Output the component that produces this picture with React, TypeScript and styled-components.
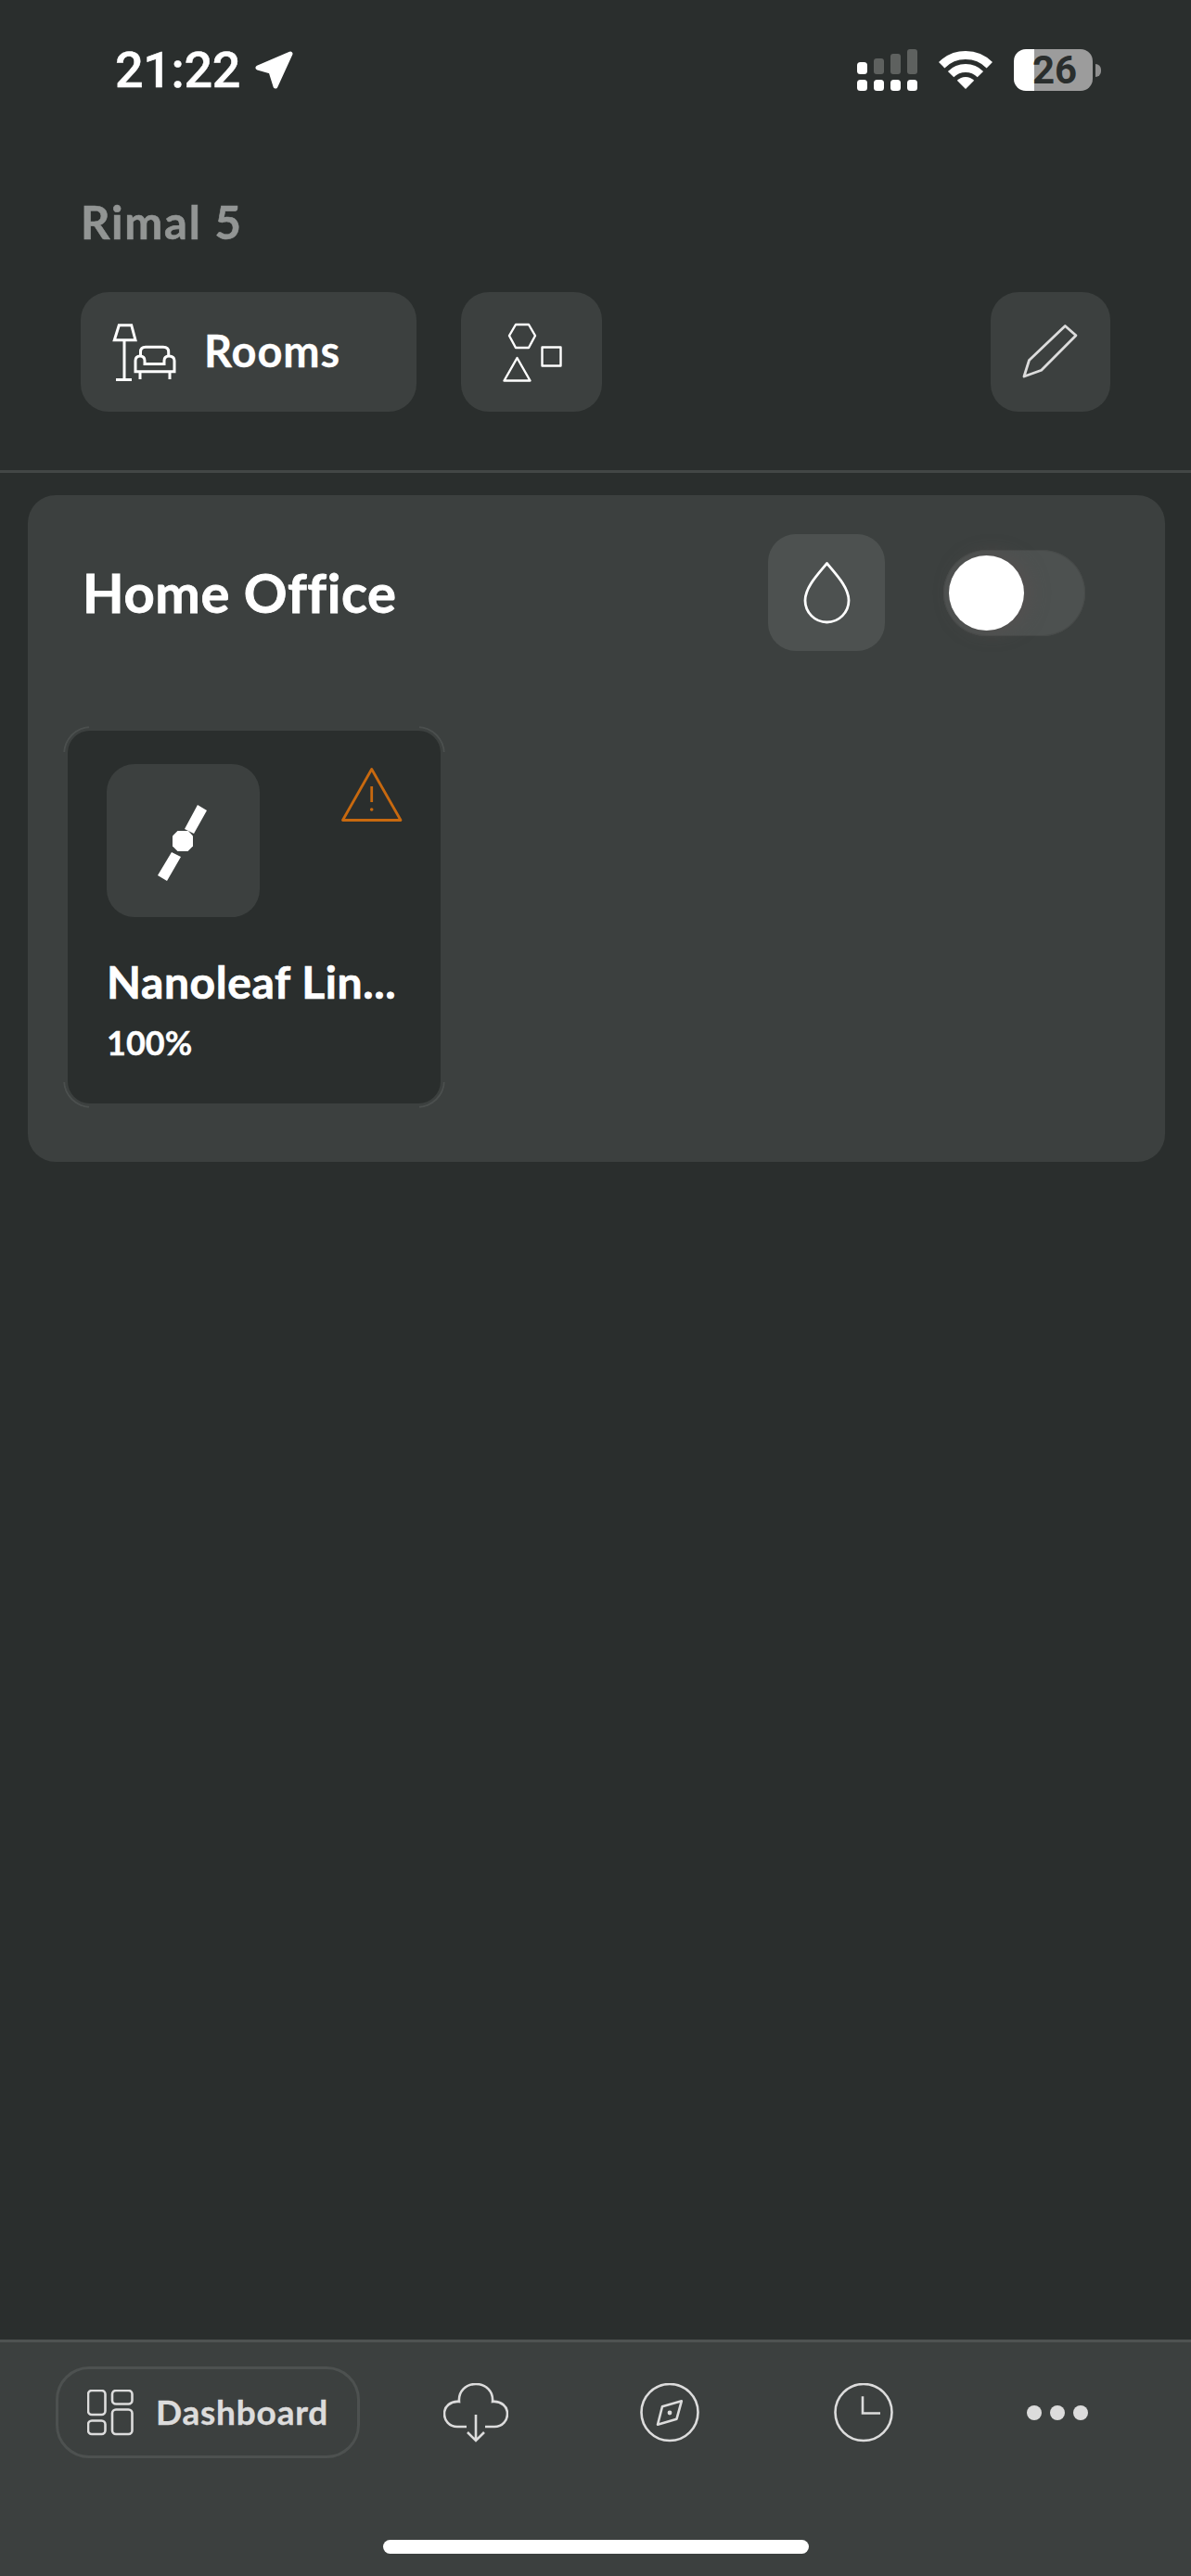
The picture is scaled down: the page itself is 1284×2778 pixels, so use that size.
import React from "react";
import styled, { createGlobalStyle } from "styled-components";

const Global = createGlobalStyle`
  html, body { margin: 0; padding: 0; background: #2a2e2d; }
  * { box-sizing: border-box; }
`;
const sans = `"Lato", "Liberation Sans", sans-serif`;

const Page = styled.div`
  width: 1284px; height: 2778px; display: flex; flex-direction: column;
  background: #2a2e2d; font-family: ${sans}; color: #fff; overflow: hidden;
`;
const StatusBar = styled.div`
  height: 215px; padding: 53px 97px 0 124px; display: flex; justify-content: space-between; align-items: flex-start;
`;
const StatusLeft = styled.div`display: flex; align-items: center; gap: 15px; height: 45px;`;
const Time = styled.span`
  font: 500 54px/48px Roboto, sans-serif; letter-spacing: -0.4px; color: #fff; -webkit-text-stroke: .5px #fff;
`;
const StatusRight = styled.div`display: flex; align-items: center; height: 45px;`;
const Battery = styled.div`
  width: 85px; height: 45px; margin-left: 23px; border-radius: 13px; display: flex; align-items: center; justify-content: center;
  background: linear-gradient(90deg, #fff 0 26%, #9c9c9c 26% 100%);
  font: 700 42px/45px Roboto, sans-serif; color: #2a2e2d; padding-left: 3px;
`;
const BatteryCap = styled.div`
  width: 6px; height: 14px; margin-left: 3px; background: #8f8f8f; border-radius: 0 7px 7px 0;
`;
const Place = styled.div`
  padding-left: 87px; font-size: 49px; line-height: 48px; font-weight: 700; color: #929594; height: 48px; margin-bottom: 52px;
  letter-spacing: 1.8px; -webkit-text-stroke: .6px #929594;
`;
const Toolbar = styled.div`display: flex; padding: 0 87px; height: 129px; margin-bottom: 63px;`;
const ToolButton = styled.div<{ $w: number; $ml?: number }>`
  width: ${p => p.$w}px; margin-left: ${p => p.$ml ?? 0}px; height: 129px; border-radius: 30px; background: #3c403f;
  display: flex; align-items: center; justify-content: center;
`;
const RoomsButton = styled(ToolButton)`justify-content: flex-start; padding-left: 33px; gap: 25px;`;
const RoomsLabel = styled.span`
  font-size: 47px; font-weight: 700; line-height: 44px; letter-spacing: .9px; padding-bottom: 3px; -webkit-text-stroke: .3px #fff;
`;
const Divider = styled.div`height: 3px; background: #434746; flex: none;`;
const Panel = styled.section`
  margin: 24px 28px 0 30px; background: #3c403f; border-radius: 30px; padding: 42px 0 63px 43px; flex: none;
`;
const PanelHead = styled.div`display: flex; align-items: center; padding-right: 86px; margin-bottom: 86px; height: 126px;`;
const PanelTitle = styled.h2`
  margin: 0 0 0 16px; flex: 1; font-size: 58px; line-height: 58px; font-weight: 700; letter-spacing: .6px; -webkit-text-stroke: .8px #fff;
`;
const DropButton = styled.div`
  width: 126px; height: 126px; border-radius: 30px; background: #4d5150; display: flex; align-items: center; justify-content: center;
  margin-right: 63px;
`;
const Toggle = styled.div`
  position: relative; width: 153px; height: 93px; border-radius: 47px; background: #4d5150; box-shadow: inset 0 0 0 1px #474a49;
`;
const Thumb = styled.div`
  position: absolute; left: 6px; top: 6px; width: 81px; height: 81px; border-radius: 50%; background: #fff;
  box-shadow: 6px 0 20px rgba(90, 80, 80, .6);
`;
const Device = styled.article`
  position: relative; width: 402px; height: 402px; padding: 36px 41px 0 42px; background: #2a2e2d; border-radius: 24px;
  &::before {
    content: ""; position: absolute; inset: -5px; border: 2px solid #4b4f4e; border-radius: 30px;
    -webkit-mask: linear-gradient(#000,#000) left top/28px 28px no-repeat, linear-gradient(#000,#000) right top/28px 28px no-repeat,
      linear-gradient(#000,#000) left bottom/28px 28px no-repeat, linear-gradient(#000,#000) right bottom/28px 28px no-repeat;
    mask: linear-gradient(#000,#000) left top/28px 28px no-repeat, linear-gradient(#000,#000) right top/28px 28px no-repeat,
      linear-gradient(#000,#000) left bottom/28px 28px no-repeat, linear-gradient(#000,#000) right bottom/28px 28px no-repeat;
  }
`;
const DeviceTop = styled.div`display: flex; justify-content: space-between; align-items: flex-start; margin-bottom: 46px;`;
const DeviceTile = styled.div`
  width: 165px; height: 165px; border-radius: 30px; background: #3c403f; display: flex; align-items: center; justify-content: center;
`;
const DeviceName = styled.div`
  font-size: 48px; line-height: 48px; font-weight: 700; margin-bottom: 23px; white-space: nowrap; letter-spacing: .6px; -webkit-text-stroke: .7px #fff;
`;
const DeviceValue = styled.div`font-size: 36px; line-height: 36px; font-weight: 700; -webkit-text-stroke: .4px #fff;`;
const Spacer = styled.div`flex: 1;`;
const TabBar = styled.nav`
  flex: none; height: 255px; background: #3c403f; border-top: 3px solid #4f5352; padding: 26px 0 0 60px; position: relative;
  display: flex; align-items: flex-start;
`;
const ActiveTab = styled.div`
  width: 328px; height: 99px; border: 3px solid #4d5150; border-radius: 36px; display: flex; align-items: center;
  padding-left: 31px; gap: 24px; margin-right: 20px;
`;
const ActiveLabel = styled.span`
  font-size: 37px; line-height: 34px; padding-bottom: 2px; font-weight: 700; color: #dcdcdc; letter-spacing: .8px; -webkit-text-stroke: .4px #dcdcdc;
`;
const Tab = styled.div`width: 209px; height: 99px; display: flex; align-items: center; justify-content: center;`;
const Dots = styled.div`display: flex; gap: 9px;`;
const Dot = styled.span`width: 16px; height: 16px; border-radius: 50%; background: #dcdcdc;`;
const HomeIndicator = styled.div`
  position: absolute; left: 413px; top: 213px; width: 459px; height: 15px; border-radius: 8px; background: #fff;
`;

const StatusSignal = () => (
  <svg width="66" height="46" viewBox="925 53 66 46">
    {[925, 943, 961, 979].map(x => <rect key={x} x={x} y="86" width="11" height="12" rx="3.5" fill="#fff" />)}
    <rect x="925" y="67" width="11" height="13" rx="3.5" fill="#fff" />
    <rect x="943" y="63" width="11" height="17" rx="3" fill="#5e615f" />
    <rect x="961" y="58" width="11" height="22" rx="3" fill="#5e615f" />
    <rect x="979" y="53" width="11" height="27" rx="3" fill="#5e615f" />
  </svg>
);
const Wifi = () => (
  <svg width="58" height="42" viewBox="-0.5 0 58 42" style={{ marginLeft: 22 }}>
    <path d="M2.7 15.2A36.5 36.5 0 0 1 54.3 15.2" fill="none" stroke="#fff" strokeWidth="9" />
    <path d="M12.6 25.1A22.5 22.5 0 0 1 44.4 25.1" fill="none" stroke="#fff" strokeWidth="9" />
    <path d="M28.5 41L19.3 31.8A13 13 0 0 1 37.7 31.8Z" fill="#fff" />
  </svg>
);
const Arrow = () => (
  <svg width="42" height="42" viewBox="275 56 42 42">
    <path d="M279 74L314 59L298 94L293 78Z" fill="#fff" stroke="#fff" strokeWidth="5" strokeLinejoin="round" />
  </svg>
);
const Lounge = () => (
  <svg width="75" height="70" viewBox="120 345 75 70" fill="none" stroke="#fff" strokeWidth="3">
    <path d="M128.3 350.7H141.7L146 366.7H123.3ZM134 367V409M125 409.5H142" />
    <path d="M151.5 384V379.5Q151.5 374.3 157 374.3H176Q181.7 374.3 181.7 379.5V384" />
    <path d="M146 400.7V389Q146 384 151 384Q156 384 156 389V392.5H177V389Q177 384 182 384Q188 384 188 389V400.7ZM151 400.7V409M183 400.7V409" />
  </svg>
);
const Shapes = () => (
  <svg width="70" height="70" viewBox="538 345 70 70" fill="none" stroke="#fff" strokeWidth="2.4" strokeLinejoin="round">
    <path d="M556 350H570L577 362L570 375H556L549 362Z" />
    <rect x="584.5" y="374.5" width="20" height="20" />
    <path d="M557.5 386L571.5 410.5H543.5Z" />
  </svg>
);
const Pencil = () => (
  <svg width="70" height="70" viewBox="1098 345 70 70" fill="none" stroke="#dcdcdc" strokeWidth="2.8" strokeLinejoin="round">
    <path d="M1104 406L1109.5 388.5L1148.3 351.5L1160 361.7L1122.7 399.3Z" />
  </svg>
);
const Drop = () => (
  <svg width="52" height="68" viewBox="865 605 52 68" fill="none" stroke="#fff" strokeWidth="2.8">
    <path d="M891.5 607.5C880 621 868 634 868 647.5A23.5 23.5 0 0 0 915 647.5C915 634 903 621 891.5 607.5Z" strokeLinejoin="round" />
  </svg>
);
const Strip = () => (
  <svg width="60" height="90" viewBox="168 860 60 90" fill="#fff">
    <path d="M213 866L223 872L209 897L199 892ZM185 917L195 922L180 948L170 942Z" />
    <path d="M191.5 894H203L208 899.5V910.5L202.5 916H191.5L186 910.5V899.5Z" />
  </svg>
);
const Warning = () => (
  <svg width="66" height="60" viewBox="367 827 66 60" fill="none" stroke="#c8690f" strokeWidth="2.8" strokeLinejoin="round" style={{ marginTop: 3 }}>
    <path d="M399.7 829.5L431 884.5H368.5Z" />
    <path d="M399.7 848V865" />
    <circle cx="399.7" cy="873" r="1.8" fill="#c8690f" stroke="none" />
  </svg>
);
const Grid = () => (
  <svg width="50" height="50" viewBox="94 2577 50 50" fill="none" stroke="#dcdcdc" strokeWidth="2.6">
    <rect x="95" y="2578" width="18.5" height="26" rx="4" />
    <rect x="121" y="2578" width="21.5" height="14.5" rx="4" />
    <rect x="95" y="2610.5" width="18.5" height="14.5" rx="4" />
    <rect x="121" y="2598.5" width="21.5" height="26.5" rx="4" />
  </svg>
);
const CloudDown = () => (
  <svg width="70" height="64" viewBox="0 0 70 64" fill="none" stroke="#dcdcdc" strokeWidth="2.6">
    <path d="M25 47H15C6 47 1 40 1 33C1 25 8 19 17 20C16 9 24 1 35 1C46 1 54 9 53 20C62 19 69 25 69 33C69 40 64 47 55 47H45" />
    <path d="M35 34V62M26 53L35 62L44 53" />
  </svg>
);
const Compass = () => (
  <svg width="64" height="64" viewBox="690 2569 64 64" fill="none" stroke="#dcdcdc" strokeWidth="2.6">
    <circle cx="722" cy="2600.5" r="30.5" />
    <path d="M734.8 2588.3L729.5 2607.7L709 2613.7L714 2594.3Z" strokeLinejoin="round" />
    <circle cx="722" cy="2601" r="2.4" fill="#dcdcdc" stroke="none" />
  </svg>
);
const Clock = () => (
  <svg width="64" height="64" viewBox="899 2569 64 64" fill="none" stroke="#dcdcdc" strokeWidth="2.6">
    <circle cx="931" cy="2600.5" r="30.5" />
    <path d="M930 2583.3V2601.5H949" />
  </svg>
);

export default function App() {
  return (
    <Page>
      <Global />
      <StatusBar>
        <StatusLeft><Time>21:22</Time><Arrow /></StatusLeft>
        <StatusRight>
          <StatusSignal /><Wifi />
          <Battery>26</Battery><BatteryCap />
        </StatusRight>
      </StatusBar>
      <Place>Rimal 5</Place>
      <Toolbar>
        <RoomsButton $w={362}><Lounge /><RoomsLabel>Rooms</RoomsLabel></RoomsButton>
        <ToolButton $w={152} $ml={48}><Shapes /></ToolButton>
        <ToolButton $w={129} $ml={419}><Pencil /></ToolButton>
      </Toolbar>
      <Divider />
      <Panel>
        <PanelHead>
          <PanelTitle>Home Office</PanelTitle>
          <DropButton><Drop /></DropButton>
          <Toggle><Thumb /></Toggle>
        </PanelHead>
        <Device>
          <DeviceTop>
            <DeviceTile><Strip /></DeviceTile>
            <Warning />
          </DeviceTop>
          <DeviceName>Nanoleaf Lin...</DeviceName>
          <DeviceValue>100%</DeviceValue>
        </Device>
      </Panel>
      <Spacer />
      <TabBar>
        <ActiveTab><Grid /><ActiveLabel>Dashboard</ActiveLabel></ActiveTab>
        <Tab><CloudDown /></Tab>
        <Tab><Compass /></Tab>
        <Tab><Clock /></Tab>
        <Tab><Dots><Dot /><Dot /><Dot /></Dots></Tab>
        <HomeIndicator />
      </TabBar>
    </Page>
  );
}
